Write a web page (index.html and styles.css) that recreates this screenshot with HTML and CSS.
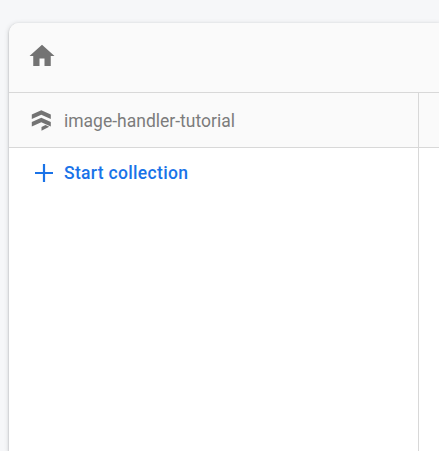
FILE: index.html
```html
<!DOCTYPE html>
<html lang="en">
<head>
<meta charset="utf-8">
<title>Data</title>
<link rel="stylesheet" href="styles.css">
</head>
<body>
<main class="card">
  <nav class="crumbs">
    <svg class="home" viewBox="0 0 24 24"><path d="M10 20v-6h4v6h5v-8h3L12 3 2 12h3v8z"/></svg>
  </nav>
  <div class="panels">
    <section class="panel">
      <header class="panel-head">
        <svg class="db" viewBox="0 0 20 21"><path d="M.8 4.600 10.300.200l9.500 4.400v4.300L10.300 4.700.800 8.900zM.8 12.100 10.300 7.700l9.500 4.400v4.300l-9.500-4.200L.8 16.400zM10.500 17l4-1.900 3.700 1.700-7.700 3.900z"/></svg>
        <span class="name">image-handler-tutorial</span>
      </header>
      <a class="start">
        <svg class="plus" viewBox="0 0 18 18"><path d="M7.900 0h2.200v7.900H18v2.200h-7.900V18H7.900v-7.900H0V7.900h7.900z"/></svg>
        <span class="label">Start collection</span>
      </a>
    </section>
    <section class="panel">
      <header class="panel-head"></header>
    </section>
  </div>
</main>
</body>
</html>
```

FILE: styles.css
```css
* {
  box-sizing: border-box;
}

body {
  margin: 0;
  height: 451px;
  padding: 23px 0 0 9px;
  overflow: hidden;
  background: #f6f7f9;
  font-family: Roboto, sans-serif;
}

.card {
  height: 428px;
  border-radius: 10px 0 0 0;
  background: #fff;
  box-shadow: 0 1px 2px rgba(60, 64, 67, .35), 0 1px 4px 1px rgba(60, 64, 67, .15);
}

.crumbs {
  height: 70px;
  padding: 18px 0 0 17.5px;
  border-bottom: 1px solid #d8d8d8;
  border-radius: 10px 0 0 0;
  background: #fafafa;
}

.home {
  display: block;
  width: 30px;
  height: 30px;
  fill: #737373;
}

.panels {
  display: grid;
  grid-template-columns: 410px 1fr;
  height: 358px;
}

.panel:first-child {
  border-right: 1px solid #d8d8d8;
}

.panel-head {
  display: flex;
  align-items: center;
  gap: 13px;
  height: 55px;
  padding-left: 22px;
  border-bottom: 1px solid #d8d8d8;
  background: #fafafa;
}

.db {
  width: 20px;
  height: 21px;
  fill: #737373;
}

.name {
  padding-top: 2px;
  color: #7c7c7c;
  font-size: 17.5px;
  line-height: 24px;
}

.start {
  display: flex;
  align-items: center;
  gap: 11px;
  height: 50px;
  padding-left: 26px;
  color: #1a73e8;
}

.plus {
  width: 18px;
  height: 18px;
  fill: #1a73e8;
}

.label {
  font-size: 17.5px;
  font-weight: 500;
  letter-spacing: .32px;
  line-height: 24px;
}
```
